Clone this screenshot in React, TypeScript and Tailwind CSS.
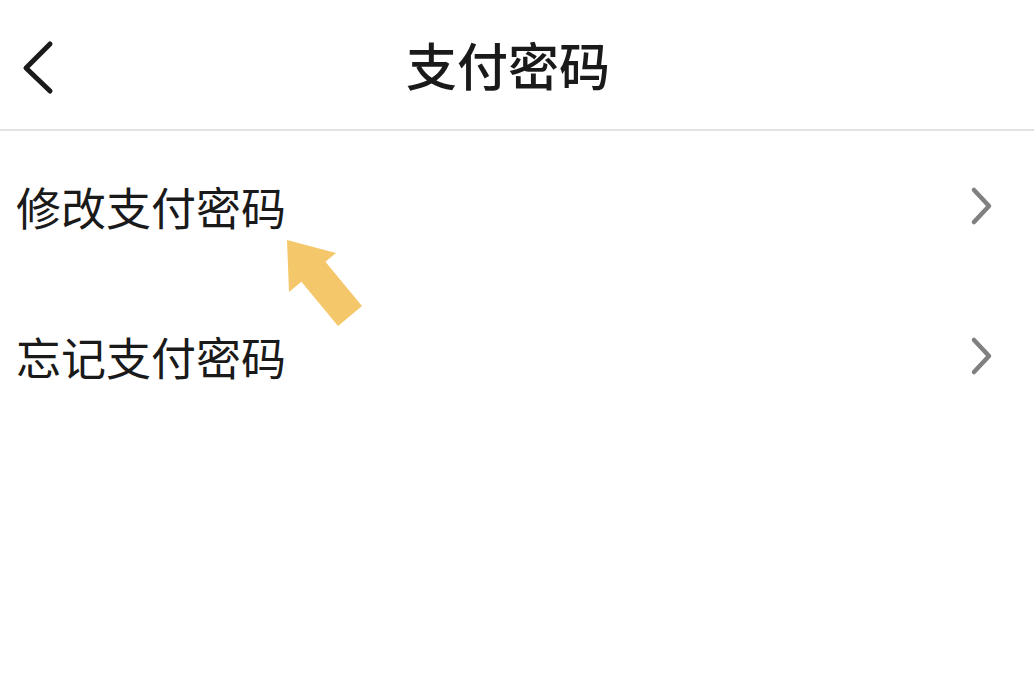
import React from 'react';

const items: string[] = ['修改支付密码', '忘记支付密码'];

function ChevronRight(): React.ReactElement {
  return (
    <svg width="28" height="40" viewBox="0 0 28 40" fill="none">
      <path d="M6 4 L21 20 L6 36" stroke="#808080" strokeWidth="4.5" strokeLinecap="round" strokeLinejoin="round" />
    </svg>
  );
}

export default function App(): React.ReactElement {
  return (
    <div
      className="relative w-[1034px] h-[689px] bg-white overflow-hidden text-[#1a1a1a]"
      style={{ fontFamily: '"Noto Sans CJK SC", "Noto Sans", sans-serif' }}
    >
      {/* Header */}
      <div className="relative h-[131px] flex items-center justify-center border-b-2 border-[#e3e3e3]">
        <button className="absolute left-[18px] top-[38px] p-0">
          <svg width="42" height="60" viewBox="0 0 42 60" fill="none">
            <path d="M32 6 L8 30 L32 53" stroke="#1a1a1a" strokeWidth="5" strokeLinecap="round" strokeLinejoin="round" />
          </svg>
        </button>
        <h1 className="text-[51px] font-medium leading-none mr-[18px]">支付密码</h1>
      </div>

      {/* List */}
      <div className="flex flex-col">
        {items.map((label) => (
          <div key={label} className="h-[150px] flex items-center justify-between pl-[16px] pr-[38px]">
            <span className="text-[45px] leading-none">{label}</span>
            <ChevronRight />
          </div>
        ))}
      </div>

      {/* Annotation arrow */}
      <svg className="absolute left-0 top-0 pointer-events-none" width="1034" height="689" viewBox="0 0 1034 689">
        <polygon
          points="287,240 336,253 325.4,261.8 362,306 338,326 301.4,281.7 289,292"
          fill="#f5c76b"
        />
      </svg>
    </div>
  );
}
